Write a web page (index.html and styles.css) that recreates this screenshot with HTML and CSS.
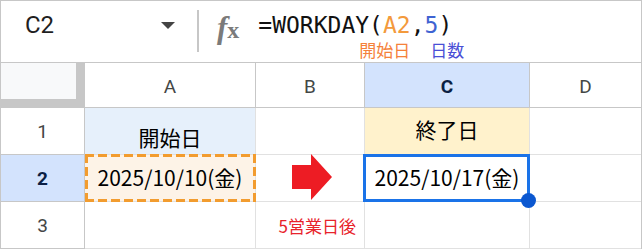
FILE: index.html
```html
<!DOCTYPE html>
<html lang="ja">
<head>
<meta charset="utf-8">
<link rel="stylesheet" href="styles.css">
</head>
<body>
<div class="sheet">
  <div class="fbar">
    <div class="namebox"><span class="ref">C2</span><span class="caret"></span></div>
    <div class="sep"></div>
    <div class="fx"><span class="ff">f</span><span class="fxx">x</span></div>
    <div class="formula">
      <div class="ftext">=WORKDAY(<span class="arg-a">A2</span>,<span class="arg-b">5</span>)</div>
      <div class="labels"><span class="lab-a">開始日</span><span class="lab-b">日数</span></div>
    </div>
  </div>
  <div class="grid">
    <div class="corner"><div class="corner-in"></div></div>
    <div class="ch">A</div>
    <div class="ch">B</div>
    <div class="ch ch-sel">C</div>
    <div class="ch ch-last">D</div>

    <div class="rh">1</div>
    <div class="cell a1">開始日</div>
    <div class="cell"></div>
    <div class="cell c1">終了日</div>
    <div class="cell last"></div>

    <div class="rh rh-sel">2</div>
    <div class="cell a2">2025/10/10(金)</div>
    <div class="cell b2">
      <svg class="arrow" width="40" height="46" viewBox="0 0 40 46"><polygon points="0,11 19,11 19,0 40,23 19,46 19,35 0,35" fill="#ed1c24"/></svg>
    </div>
    <div class="cell c2">2025/10/17(金)</div>
    <div class="cell last"></div>

    <div class="rh">3</div>
    <div class="cell"></div>
    <div class="cell b3">5営業日後</div>
    <div class="cell"></div>
    <div class="cell last"></div>
  </div>
</div>
</body>
</html>
```
FILE: styles.css
```css
html, body {
  margin: 0;
  padding: 0;
  background: #fff;
}
body {
  width: 644px;
  height: 251px;
  overflow: hidden;
}
.sheet {
  width: 642px;
  box-sizing: border-box;
  border: 1px solid #c7c7c7;
  border-bottom: none;
}
.fbar {
  height: 61px;
  border-bottom: 1px solid #c7c7c7;
  display: flex;
  align-items: flex-start;
}
.namebox {
  width: 196px;
  box-sizing: border-box;
  padding: 0 22px 0 24px;
  display: flex;
  justify-content: space-between;
  align-items: center;
  height: 28px;
  margin-top: 10px;
}
.ref {
  font-family: Roboto, "Liberation Sans", sans-serif;
  font-size: 24px;
  line-height: 28px;
  color: #1f1f1f;
}
.caret {
  width: 0;
  height: 0;
  border-left: 7px solid transparent;
  border-right: 7px solid transparent;
  border-top: 7px solid #444;
  margin-top: 1px;
}
.sep {
  width: 2px;
  height: 42px;
  margin-top: 9px;
  background: #c7c7c7;
}
.fx {
  margin-left: 18px;
  margin-top: 11px;
  height: 32px;
  display: flex;
  align-items: baseline;
  color: #7b7b7b;
  font-family: "Liberation Serif", serif;
  line-height: 32px;
}
.ff {
  font-style: italic;
  font-weight: bold;
  font-size: 31px;
}
.fxx {
  font-weight: bold;
  font-size: 24px;
  margin-left: 0;
}
.formula {
  margin-left: 19px;
  margin-top: 10px;
  display: flex;
  flex-direction: column;
}
.ftext {
  font-family: "DejaVu Sans Mono", "Liberation Mono", monospace;
  font-size: 23px;
  line-height: 28px;
  color: #111;
  white-space: nowrap;
}
.arg-a { color: #f39a3c; }
.arg-b { color: #3e63d2; }
.labels {
  margin-top: 3px;
  padding-left: 101px;
  display: flex;
  gap: 20px;
  font-family: "Noto Sans CJK JP", sans-serif;
  font-size: 17px;
  line-height: 16px;
}
.lab-a { color: #f5813a; }
.lab-b { color: #4a4fd6; }

.grid {
  display: grid;
  grid-template-columns: 84px 171px 109px 165px 111px;
  grid-template-rows: 45px 47px 47px 47px;
}
.grid > div {
  box-sizing: border-box;
}
.corner {
  background: #c7c7c7;
}
.corner-in {
  width: 75px;
  height: 36px;
  background: #f8f9fa;
}
.ch, .rh {
  display: flex;
  align-items: center;
  justify-content: center;
  font-family: Roboto, "Liberation Sans", sans-serif;
  font-size: 19px;
  color: #444746;
  border-right: 1px solid #c7c7c7;
  border-bottom: 1px solid #c7c7c7;
  background: #fff;
}
.ch { padding-top: 3px; }
.ch-last { border-right: none; }
.ch-sel, .rh-sel {
  background: #d3e3fd;
  color: #0b1f44;
  font-weight: bold;
}
.cell {
  position: relative;
  display: flex;
  align-items: center;
  justify-content: center;
  border-right: 1px solid #e1e1e1;
  border-bottom: 1px solid #e1e1e1;
  font-family: "Noto Sans CJK JP", sans-serif;
  font-size: 21px;
  line-height: 21px;
  color: #000;
  white-space: nowrap;
}
.cell.last { border-right: none; }
.a1 {
  background: #e6f0fb;
  align-items: flex-end;
  padding-bottom: 6px;
}
.c1 {
  background: #fff2cc;
  padding-bottom: 3px;
}
.a2 {
  background: #fdf3e7;
  padding-bottom: 2px;
}
.a2::after {
  content: "";
  position: absolute;
  top: -1px;
  left: 0;
  right: -1px;
  bottom: -1px;
  background:
    repeating-linear-gradient(90deg, #f29c2f 0 9px, transparent 9px 13px) top left / 100% 3px no-repeat,
    repeating-linear-gradient(90deg, #f29c2f 0 9px, transparent 9px 13px) bottom left / 100% 3px no-repeat,
    repeating-linear-gradient(180deg, #f29c2f 0 9px, transparent 9px 13px) top left / 3px 100% no-repeat,
    repeating-linear-gradient(180deg, #f29c2f 0 9px, transparent 9px 13px) top right / 3px 100% no-repeat;
}
.b2 .arrow {
  position: absolute;
  left: 36px;
  top: -1px;
}
.c2 {
  padding-bottom: 2px;
}
.c2::before {
  content: "";
  position: absolute;
  top: -1px;
  left: -2px;
  right: -1px;
  bottom: -1px;
  border: 3px solid #1a73e8;
  box-sizing: border-box;
}
.c2::after {
  content: "";
  position: absolute;
  right: -7px;
  bottom: -7px;
  width: 15px;
  height: 15px;
  border-radius: 50%;
  background: #0b57d0;
  z-index: 2;
}
.b3 {
  justify-content: flex-end;
  padding-right: 8px;
  font-size: 17px;
  line-height: 17px;
  color: #e8232b;
}
```
